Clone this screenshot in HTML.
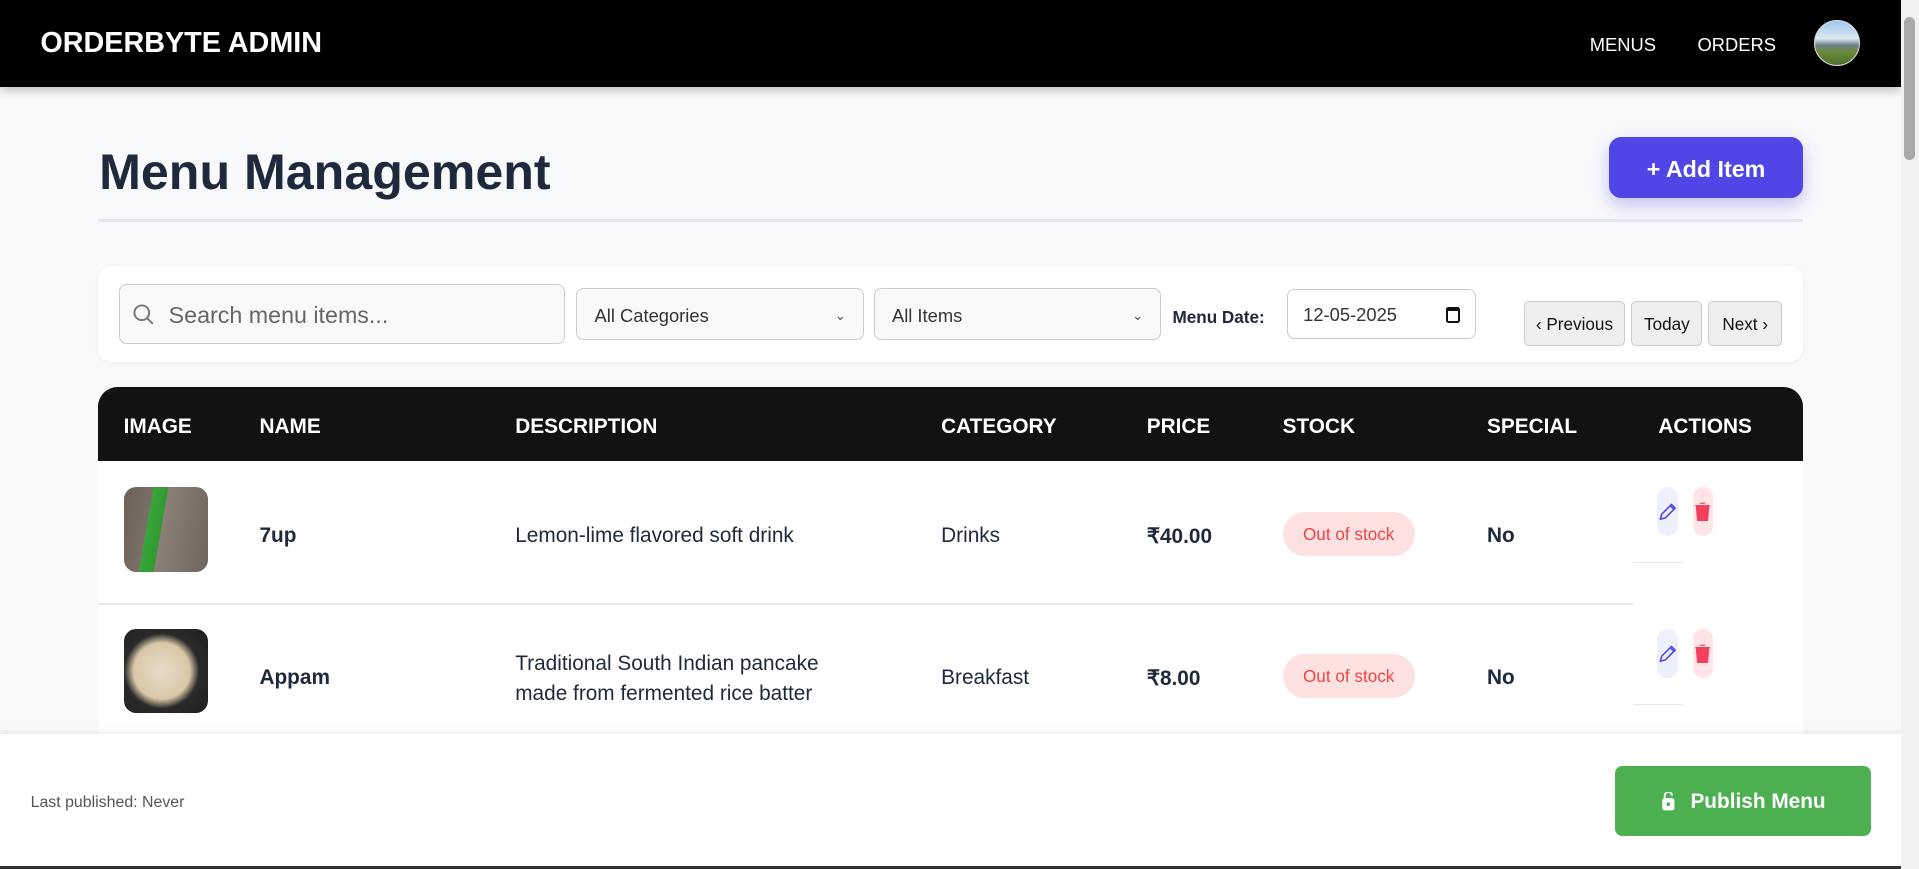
<!DOCTYPE html>
<html><head><meta charset="utf-8"><style>
html{zoom:1.22385}
*{box-sizing:border-box;margin:0;padding:0}
body{width:1568px;height:710px;overflow:hidden;background:#f8f9fb;font-family:"Liberation Sans",sans-serif;position:relative;color:#1e293b}
.abs{position:absolute}
.nav{left:0;top:0;width:1553px;height:71px;background:#000;box-shadow:0 3px 8px rgba(0,0,0,.25)}
.nav .brand{left:33px;top:22px;color:#fff;font-weight:bold;font-size:23.5px}
.nav a{color:#fff;font-size:15px;top:28px;position:absolute}
.av{left:1482px;top:16px;width:38px;height:38px;border-radius:50%;background:linear-gradient(#9cc6ee 0,#dfe8f0 40%,#6d7d8a 55%,#6a8c3a 70%,#4d6e2a 100%);border:1px solid #ddd}
h1{left:81px;top:117px;font-size:41px;font-weight:bold;color:#1e293b;position:absolute}
.add{left:1315px;top:112px;width:158px;height:50px;background:#4f46e5;border-radius:10px;color:#fff;font-weight:bold;font-size:19px;display:flex;align-items:center;justify-content:center;box-shadow:0 6px 14px rgba(79,70,229,.3);padding-top:3px}
.hr{left:80px;top:179px;width:1393px;height:2px;background:#e2e8f0}
.card{left:80px;top:217px;width:1393px;height:79px;background:#fff;border-radius:12px;box-shadow:0 1px 4px rgba(0,0,0,.04)}
.inp{border:1px solid #ccc;border-radius:6px;background:#f9f9f9;font-size:15px;color:#333;display:flex;align-items:center;padding-top:3px}
.btn{top:246px;height:37px;background:#efefef;border:1px solid #ccc;border-radius:4px;font-size:14px;display:flex;align-items:center;justify-content:center;color:#111;padding-top:2px}
.th{left:80px;top:316px;width:1393px;height:61px;background:#121212;border-radius:16px 16px 0 0}
.th span{position:absolute;top:23px;color:#fff;font-weight:bold;font-size:17px}
.rowbg{left:80px;top:377px;width:1393px;height:240px;background:#fff}
.cell{position:absolute;font-size:17px;color:#1e293b}
.b{font-weight:bold}
.pill{width:108px;height:36px;border-radius:18px;background:#fee2e2;color:#ef4444;font-size:14px;display:flex;align-items:center;justify-content:center;padding-top:1px}
.img{width:69px;height:69px;border-radius:10px}
.ed{width:17px;height:40px;border-radius:9px;background:#eef0fe;display:flex;align-items:center;justify-content:center}
.dl{width:17px;height:40px;border-radius:9px;background:#ffe4e8;display:flex;align-items:center;justify-content:center}
.foot{left:0;top:600px;width:1553px;height:108px;background:#fff;box-shadow:0 -2px 6px rgba(0,0,0,.08)}
.pub{left:1320px;top:626px;width:209px;height:57px;background:#4caf50;border-radius:6px;color:#fff;font-weight:bold;font-size:17px;display:flex;align-items:center;justify-content:center;gap:12px;padding-top:2px}
.sb{left:1553px;top:0;width:15px;height:710px;background:#f1f1f1}
.thumb{left:1556px;top:14px;width:9px;height:117px;background:#a8a8a8;border-radius:5px}
</style></head><body>
<div class="abs nav"><div class="abs brand">ORDERBYTE ADMIN</div><a style="left:1299px">MENUS</a><a style="left:1387px">ORDERS</a><div class="abs av"></div></div>
<h1>Menu Management</h1>
<div class="abs add">+ Add Item</div>
<div class="abs hr"></div>
<div class="abs card"></div>
<div class="abs inp" style="left:97px;top:232px;width:365px;height:49px;font-size:19px;color:#666"><svg width="20" height="20" viewBox="0 0 20 20" style="margin:0 10px 0 10px"><circle cx="8" cy="8" r="6" fill="none" stroke="#777" stroke-width="1.6"/><path d="M12.5 12.5L17 17" stroke="#777" stroke-width="1.6"/></svg>Search menu items...</div>
<div class="abs inp" style="left:471px;top:235px;width:235px;height:43px;padding:3px 14px 0;justify-content:space-between">All Categories<span style="font-size:11px;color:#555">&#8964;</span></div>
<div class="abs inp" style="left:714px;top:235px;width:235px;height:43px;padding:3px 14px 0;justify-content:space-between">All Items<span style="font-size:11px;color:#555">&#8964;</span></div>
<div class="abs b" style="left:958px;top:251px;font-size:14px">Menu Date:</div>
<div class="abs inp" style="left:1052px;top:236px;width:154px;height:41px;background:#fff;padding:2px 12px 0;justify-content:space-between">12-05-2025<span style="width:12px;height:13px;border:2px solid #111;border-top-width:4px;border-radius:2px"></span></div>
<div class="abs btn" style="left:1245px;width:83px">‹ Previous</div>
<div class="abs btn" style="left:1333px;width:58px">Today</div>
<div class="abs btn" style="left:1396px;width:60px">Next ›</div>
<div class="abs rowbg"></div>
<div class="abs th"><span style="left:21px">IMAGE</span><span style="left:132px">NAME</span><span style="left:341px">DESCRIPTION</span><span style="left:689px">CATEGORY</span><span style="left:857px">PRICE</span><span style="left:968px">STOCK</span><span style="left:1135px">SPECIAL</span><span style="left:1275px">ACTIONS</span></div>
<div class="abs" style="left:80px;top:493px;width:1254px;height:1px;background:#e2e8f0"></div>
<div class="abs" style="left:1334px;top:459px;width:41px;height:1px;background:#e2e8f0"></div>
<div class="abs" style="left:1334px;top:575px;width:41px;height:1px;background:#e2e8f0"></div>
<div class="abs img" style="left:101px;top:398px;background:linear-gradient(100deg,#6b6058 0,#7a7068 30%,#3aa53a 30%,#2f9b2f 45%,#8a8078 45%,#6f655d 100%)"></div>
<div class="cell b" style="left:212px;top:428px">7up</div>
<div class="cell" style="left:421px;top:428px">Lemon-lime flavored soft drink</div>
<div class="cell" style="left:769px;top:428px">Drinks</div>
<div class="cell b" style="left:937px;top:428px">₹40.00</div>
<div class="abs pill" style="left:1048px;top:418px">Out of stock</div>
<div class="cell b" style="left:1215px;top:428px">No</div>
<div class="abs img" style="left:101px;top:514px;background:radial-gradient(circle at 45% 50%,#e8dcc8 0,#d8c8a8 45%,#2a2a2a 60%,#1e1e1e 100%)"></div>
<div class="cell b" style="left:212px;top:544px">Appam</div>
<div class="cell" style="left:421px;top:530px;line-height:25px">Traditional South Indian pancake<br>made from fermented rice batter</div>
<div class="cell" style="left:769px;top:544px">Breakfast</div>
<div class="cell b" style="left:937px;top:544px">₹8.00</div>
<div class="abs pill" style="left:1048px;top:534px">Out of stock</div>
<div class="cell b" style="left:1215px;top:544px">No</div>
<div class="abs ed" style="left:1354px;top:398px"><svg width="16" height="16" viewBox="0 0 16 16"><path d="M2 14l1-4 8-8 3 3-8 8z M10 3l3 3" fill="none" stroke="#4f46e5" stroke-width="1.3"/></svg></div>
<div class="abs dl" style="left:1383px;top:398px"><svg width="14" height="16" viewBox="0 0 14 16"><path d="M1 3h12M5 1h4M2 4h10l-1 11H3z" fill="#f43f5e" stroke="#f43f5e"/></svg></div>
<div class="abs ed" style="left:1354px;top:514px"><svg width="16" height="16" viewBox="0 0 16 16"><path d="M2 14l1-4 8-8 3 3-8 8z M10 3l3 3" fill="none" stroke="#4f46e5" stroke-width="1.3"/></svg></div>
<div class="abs dl" style="left:1383px;top:514px"><svg width="14" height="16" viewBox="0 0 14 16"><path d="M1 3h12M5 1h4M2 4h10l-1 11H3z" fill="#f43f5e" stroke="#f43f5e"/></svg></div>
<div class="abs foot"></div>
<div class="abs" style="left:25px;top:649px;font-size:13px;color:#555">Last published: Never</div>
<div class="abs pub"><svg width="12" height="16" viewBox="0 0 12 16"><rect x="1" y="5" width="10" height="10" rx="2" fill="#fff"/><path d="M3 5V3a3 3 0 0 1 6 0" fill="none" stroke="#fff" stroke-width="1.5"/><circle cx="6" cy="10" r="1.5" fill="#4caf50"/></svg>Publish Menu</div>
<div class="abs" style="left:0;top:708px;width:1568px;height:2px;background:#333"></div>
<div class="abs sb"></div><div class="abs thumb"></div>
</body></html>
